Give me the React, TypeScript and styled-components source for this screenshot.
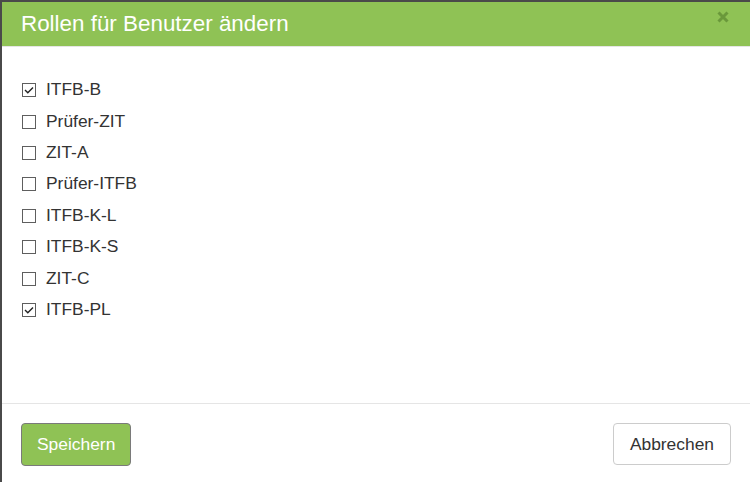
import React, { useState } from 'react'
import styled, { createGlobalStyle } from 'styled-components'

const GlobalStyle = createGlobalStyle`
	html, body {
		margin: 0;
		padding: 0;
		background: #4a4a4a;
		font-family: 'Liberation Sans', Arial, sans-serif;
	}
`

const Backdrop = styled.div`
	height: 482px;
	padding: 2px 0 0 2px;
	box-sizing: border-box;
	overflow: hidden;
	background: #4a4a4a;
`

const Modal = styled.div`
	width: 748px;
	height: 500px;
	background: #fff;
	display: flex;
	flex-direction: column;
`

const Header = styled.div`
	height: 44px;
	flex: none;
	background: #8fc255;
	border-bottom: 1px solid #e5e5e5;
	display: flex;
	align-items: center;
	justify-content: space-between;
	padding: 0 21px 0 19px;
`

const Title = styled.h4`
	margin: 0;
	color: #fff;
	font-size: 22.4px;
	font-weight: 400;
	line-height: 1;
	padding-top: 1px;
`

const Close = styled.button`
	border: none;
	background: none;
	padding: 0;
	width: 12px;
	height: 12px;
	margin-top: -14px;
	display: flex;
	cursor: pointer;
`

const Body = styled.div`
	height: 356px;
	flex: none;
	box-sizing: border-box;
	padding: 27px 20px 0;
`

const Row = styled.label`
	display: flex;
	align-items: center;
	gap: 10px;
	height: 31.4px;
	font-size: 17.4px;
	color: #333;
	cursor: pointer;
`

const Box = styled.span`
	width: 14px;
	height: 14px;
	border: 1px solid #5e5e5e;
	box-sizing: border-box;
	flex: none;
	display: flex;
	align-items: center;
	justify-content: center;
	background: #fff;
	margin-top: 1px;
`

const Footer = styled.div`
	border-top: 1px solid #e5e5e5;
	padding: 19px 19px 0 19px;
	display: flex;
	justify-content: space-between;
	align-items: flex-start;
`

const Button = styled.button<{ $primary?: boolean }>`
	height: ${p => (p.$primary ? '43px' : '42px')};
	padding: 0 ${p => (p.$primary ? '15px' : '16px')};
	border-radius: 4px;
	font-family: 'Liberation Sans', Arial, sans-serif;
	font-size: 17.4px;
	cursor: pointer;
	background: ${p => (p.$primary ? '#8fc255' : '#fff')};
	color: ${p => (p.$primary ? '#fff' : '#333')};
	border: 1px solid ${p => (p.$primary ? '#7a7a7a' : '#cccccc')};
`

const roles = [
	{ name: 'ITFB-B', checked: true },
	{ name: 'Prüfer-ZIT', checked: false },
	{ name: 'ZIT-A', checked: false },
	{ name: 'Prüfer-ITFB', checked: false },
	{ name: 'ITFB-K-L', checked: false },
	{ name: 'ITFB-K-S', checked: false },
	{ name: 'ZIT-C', checked: false },
	{ name: 'ITFB-PL', checked: true },
]

const App = () => {
	const [state, setState] = useState(roles.map(r => r.checked))

	const toggle = (i: number) =>
		setState(s => s.map((v, j) => (j === i ? !v : v)))

	return (
		<>
			<GlobalStyle />
			<Backdrop>
				<Modal>
					<Header>
						<Title>Rollen für Benutzer ändern</Title>
						<Close aria-label='Schließen'>
							<svg width='12' height='12' viewBox='0 0 12 12'>
								<path
									d='M1.5 1.5 L10.5 10.5 M10.5 1.5 L1.5 10.5'
									stroke='#6a983b'
									strokeWidth='3'
								/>
							</svg>
						</Close>
					</Header>
					<Body>
						{roles.map((role, i) => (
							<Row key={role.name} onClick={() => toggle(i)}>
								<Box>
									{state[i] && (
										<svg width='10' height='8' viewBox='0 0 10 8'>
											<path
												d='M1 4 L3.8 6.8 L9 1.5'
												fill='none'
												stroke='#222'
												strokeWidth='1.4'
											/>
										</svg>
									)}
								</Box>
								{role.name}
							</Row>
						))}
					</Body>
					<Footer>
						<Button $primary>Speichern</Button>
						<Button>Abbrechen</Button>
					</Footer>
				</Modal>
			</Backdrop>
		</>
	)
}

export default App
